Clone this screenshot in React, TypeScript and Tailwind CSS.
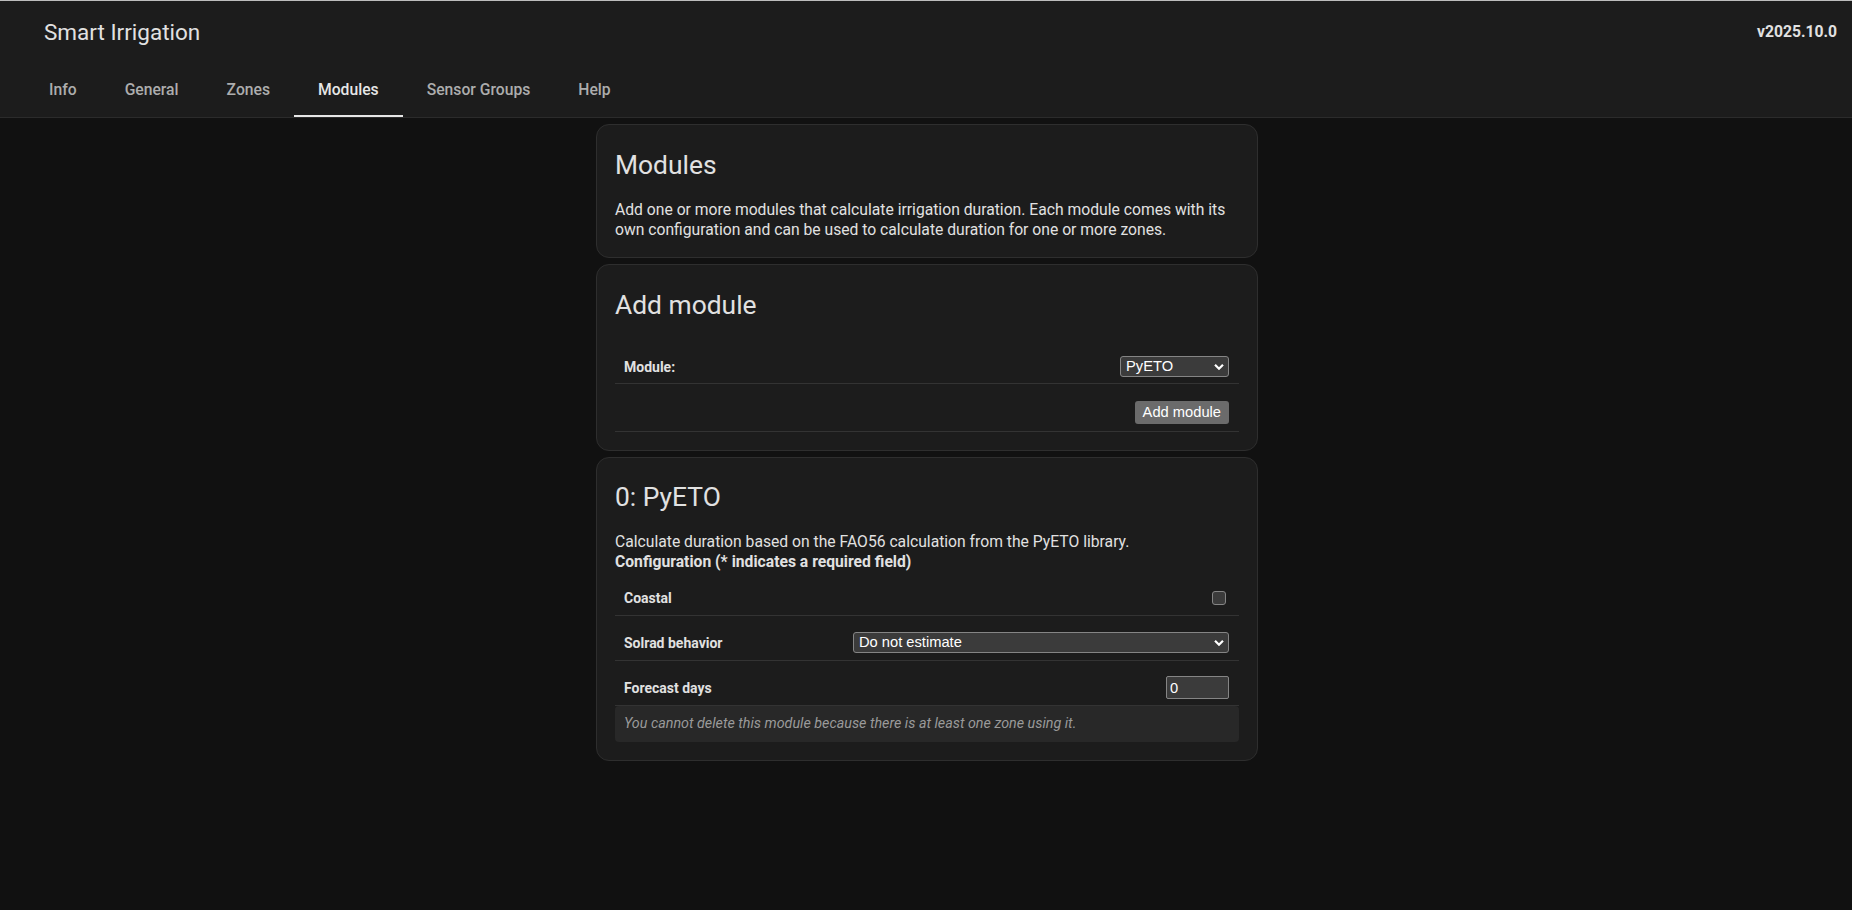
import React from "react";

const tabs = ["Info", "General", "Zones", "Modules", "Sensor Groups", "Help"];

function Chevron() {
  return (
    <svg
      className="pointer-events-none absolute right-[5px] top-1/2 -translate-y-1/2"
      width="10"
      height="7"
      viewBox="0 0 10 7"
      fill="none"
    >
      <polyline points="1,1.2 5,5.2 9,1.2" stroke="#ffffff" strokeWidth="2.2" />
    </svg>
  );
}

function Select({ value, width }: { value: string; width: string }) {
  return (
    <div className={`relative ${width}`}>
      <select
        defaultValue={value}
        className="block h-[21px] w-full appearance-none rounded-[3px] border border-[#858585] bg-[#3b3b3b] pl-[5px] font-['Liberation_Sans',Arial,sans-serif] text-[14.7px] leading-[19px] text-white outline-none"
      >
        <option value={value}>{value}</option>
      </select>
      <Chevron />
    </div>
  );
}

function Card({ children, pad = "pt-[24px] pb-[17px]" }: { children: React.ReactNode; pad?: string }) {
  return (
    <section className={`w-[662px] rounded-[13px] border border-[#2e2e2e] bg-[#1c1c1c] px-[18px] ${pad}`}>
      {children}
    </section>
  );
}

function Row({ label, children, pad }: { label: string; children?: React.ReactNode; pad: string }) {
  return (
    <div className={`flex items-center justify-between border-b border-[#333333] pl-[9px] pr-[10px] ${pad}`}>
      <span className="text-[14px] font-bold leading-[20px]">{label}</span>
      {children}
    </div>
  );
}

export default function App() {
  return (
    <div className="min-h-screen bg-[#111111] font-['Roboto',sans-serif] text-[#e1e1e1]">
      <header className="border-t border-b border-t-[#bdbdbd] border-b-[#2b2b2b] bg-[#1c1c1c]">
        <div className="flex h-[62px] items-center justify-between pl-[44px] pr-[15px]">
          <h1 className="text-[22.5px] font-normal leading-[28px]">Smart Irrigation</h1>
          <span className="text-[15.7px] font-bold">v2025.10.0</span>
        </div>
        <nav className="flex h-[54px] pl-[25px]">
          {tabs.map((t) => (
            <div
              key={t}
              className={`relative flex h-full items-center px-[24px] text-[15.7px] font-medium ${
                t === "Modules" ? "text-[#e6e6e6]" : "text-[#adadad]"
              }`}
            >
              {t}
              {t === "Modules" && <span className="absolute bottom-0 left-0 right-0 h-[2px] bg-[#e6e6e6]" />}
            </div>
          ))}
        </nav>
      </header>

      <main className="flex flex-col items-center gap-[6px] pt-[6px] pb-10 pl-[2px]">
        <Card>
          <h2 className="text-[26.4px] font-normal leading-[32px]">Modules</h2>
          <p className="mt-[19px] text-[15.7px] leading-[20px]">
            Add one or more modules that calculate irrigation duration. Each module comes with its own configuration and can be used to calculate duration for one or more zones.
          </p>
        </Card>

        <Card pad="pt-[24px] pb-[18px]">
          <h2 className="text-[26.4px] font-normal leading-[32px]">Add module</h2>
          <div className="mt-[19px]">
            <Row label="Module:" pad="pt-[16px] pb-[6px]">
              <Select value="PyETO" width="w-[109px]" />
            </Row>
            <div className="flex justify-end border-b border-[#333333] pt-[17px] pb-[7px] pr-[10px]">
              <button className="h-[23px] rounded-[3px] bg-[#6b6b6b] px-[8px] font-['Liberation_Sans',Arial,sans-serif] text-[14.7px] text-white">
                Add module
              </button>
            </div>
          </div>
        </Card>

        <Card pad="pt-[23px] pb-[18px]">
          <h2 className="text-[26.4px] font-normal leading-[32px]">0: PyETO</h2>
          <p className="mt-[19px] text-[15.7px] leading-[20px]">
            Calculate duration based on the FAO56 calculation from the PyETO library.
            <br />
            <span className="font-bold">Configuration (* indicates a required field)</span>
          </p>
          <Row label="Coastal" pad="pt-[16px] pb-[7px]">
            <span className="mr-[3px] h-[14px] w-[14px] rounded-[3px] border border-[#858585] bg-[#3b3b3b]" />
          </Row>
          <Row label="Solrad behavior" pad="pt-[16px] pb-[7px]">
            <Select value="Do not estimate" width="w-[376px]" />
          </Row>
          <Row label="Forecast days" pad="pt-[15px] pb-[6px]">
            <input
              defaultValue="0"
              className="h-[23px] w-[63px] rounded-[2px] border border-[#858585] bg-[#3b3b3b] pl-[3px] font-['Liberation_Sans',Arial,sans-serif] text-[14.7px] text-white outline-none"
            />
          </Row>
          <div className="flex h-[36px] items-center rounded-[4px] bg-[#282828] px-[9px] text-[14.3px] italic text-[#9a9a9a]">
            You cannot delete this module because there is at least one zone using it.
          </div>
        </Card>
      </main>
    </div>
  );
}
